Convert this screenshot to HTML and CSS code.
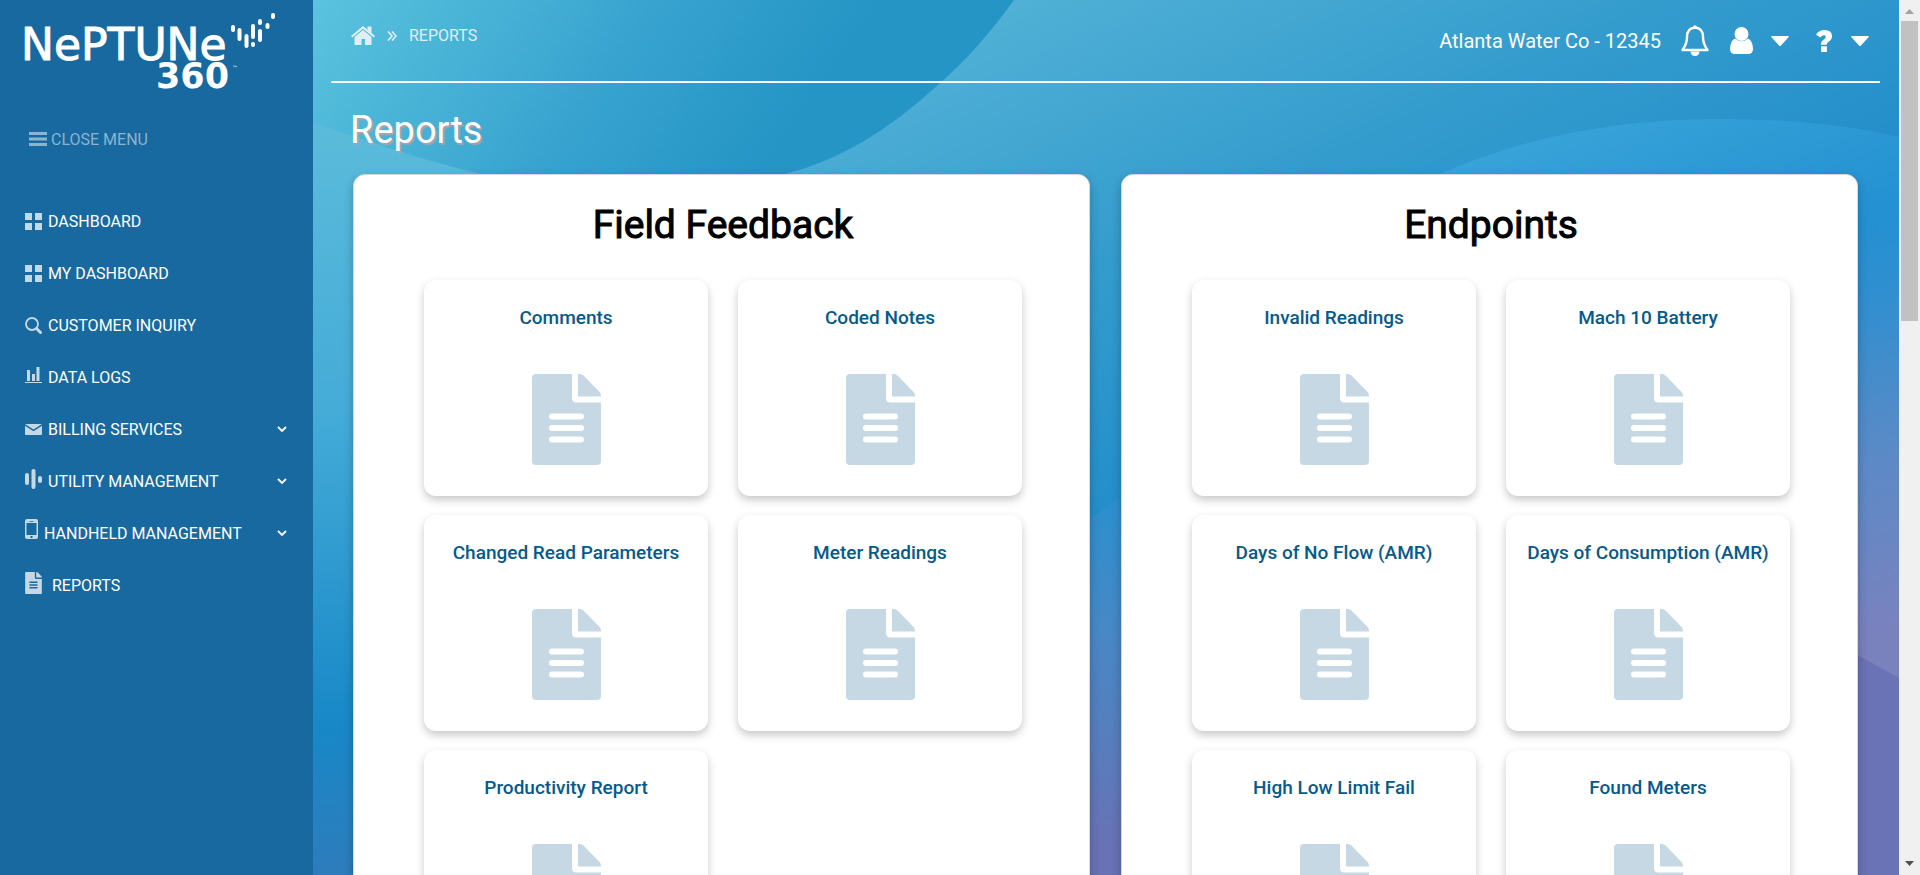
FILE: index.html
```html
<!DOCTYPE html>
<html lang="en">
<head>
<meta charset="utf-8">
<title>Neptune 360 - Reports</title>
<link rel="stylesheet" href="styles.css">
</head>
<body>
<svg class="defs" aria-hidden="true">
  <symbol id="doc" viewBox="0 0 69 91">
    <path fill-rule="evenodd" d="M4 0H40V24Q40 28.500 44.500 28.500H69V87Q69 91 65 91H4Q0 91 0 87V4Q0 0 4 0ZM20 39.500A3 3 0 0 0 20 45.500H49A3 3 0 0 0 49 39.500ZM20 51A3 3 0 0 0 20 57H49A3 3 0 0 0 49 51ZM20 62.500A3 3 0 0 0 20 68.500H49A3 3 0 0 0 49 62.500Z"/>
    <path d="M46 0H48Q50 0 51.500 1.500L68 18.500Q69 20 69 22.500H46Z"/>
  </symbol>
  <symbol id="grid" viewBox="0 0 17 17"><path d="M0 0h7v7H0zM10 0h7v7h-7zM0 10h7v7H0zM10 10h7v7h-7z"/></symbol>
  <symbol id="chevron" viewBox="0 0 10 7"><path d="M1 1l4 4 4-4" fill="none" stroke="currentColor" stroke-width="1.800"/></symbol>
  <symbol id="caret" viewBox="0 0 18 10"><path d="M1 0H17Q18.500 0 17.500 1.200L10 9.500Q9 10.500 8 9.500L.5 1.200Q-.5 0 1 0Z"/></symbol>
</svg>

<aside class="sidebar">
  <a class="logo" href="#" aria-label="Neptune 360">
    <svg viewBox="0 0 256 80" width="256" height="80">
      <text class="logo-name" x="-4" y="48">NePTUNe</text>
      <text class="logo-number" x="131" y="76">360</text>
      <text class="logo-mark" x="207" y="58">™</text>
      <g stroke="#fff" stroke-width="4" stroke-linecap="round">
        <path d="M208 15v3M214.500 18v9M221.500 24v10M228 14v11M228 32v1M235 9v2M235 19v9M242.500 13v2M248 3v2"/>
      </g>
    </svg>
  </a>
  <button class="close-menu" type="button">
    <svg viewBox="0 0 18 14" width="18" height="14"><path d="M0 0h18v3H0zM0 5.500h18v3H0zM0 11h18v3H0z"/></svg>
    CLOSE MENU
  </button>
  <nav>
    <ul class="nav">
      <li><a href="#"><svg width="17" height="17"><use href="#grid"/></svg><span>DASHBOARD</span></a></li>
      <li><a href="#"><svg width="17" height="17"><use href="#grid"/></svg><span>MY DASHBOARD</span></a></li>
      <li><a href="#"><svg viewBox="0 0 17 17" width="17" height="17"><circle cx="7" cy="7" r="6" fill="none" stroke="currentColor" stroke-width="1.800"/><path d="M11.500 11.500L15.500 15.500" stroke="currentColor" stroke-width="3" stroke-linecap="round"/></svg><span>CUSTOMER INQUIRY</span></a></li>
      <li><a href="#"><svg class="raised" viewBox="0 0 17 16" width="17" height="16"><path d="M2 3h3v11H2zM7 7h3v7H7zM11.500 0h3v14h-3zM0 15h17v1H0z"/></svg><span>DATA LOGS</span></a></li>
      <li><a href="#"><svg viewBox="0 0 17 11" width="17" height="11"><path d="M0 0H17L8.500 5.500ZM0 1.800L8.500 7.200 17 1.800V10Q17 11 16 11H1Q0 11 0 10Z"/></svg><span>BILLING SERVICES</span><svg class="chevron" width="10" height="7"><use href="#chevron"/></svg></a></li>
      <li><a href="#"><svg class="raised" viewBox="0 0 17 20" width="17" height="20"><rect y="4" width="4" height="12" rx="2"/><rect x="6.500" width="4" height="20" rx="2"/><rect x="13" y="7" width="4" height="7" rx="2"/></svg><span>UTILITY MANAGEMENT</span><svg class="chevron" width="10" height="7"><use href="#chevron"/></svg></a></li>
      <li><a href="#"><svg class="raised-high" viewBox="0 0 13 20" width="13" height="20"><path fill-rule="evenodd" d="M2 0H11Q13 0 13 2V18Q13 20 11 20H2Q0 20 0 18V2Q0 0 2 0ZM1.500 4V16H11.500V4ZM4.500 2V2.800H8.500V2ZM5.500 17V19H7.500V17Z"/></svg><span>HANDHELD MANAGEMENT</span><svg class="chevron" width="10" height="7"><use href="#chevron"/></svg></a></li>
      <li><a class="current" href="#"><svg class="raised" width="17" height="22"><use href="#doc"/></svg><span>REPORTS</span></a></li>
    </ul>
  </nav>
</aside>

<div class="content">
  <svg class="backdrop" viewBox="0 0 1586 875" preserveAspectRatio="none" aria-hidden="true">
    <defs>
      <linearGradient id="base" gradientUnits="userSpaceOnUse" x1="600" y1="0" x2="900" y2="640">
        <stop offset="0" stop-color="#55b4d7"/><stop offset=".45" stop-color="#349ccd"/><stop offset=".8" stop-color="#228dca"/><stop offset="1" stop-color="#228dca"/>
      </linearGradient>
      <linearGradient id="corner" gradientUnits="userSpaceOnUse" x1="0" y1="0" x2="380" y2="270">
        <stop offset="0" stop-color="#5ac3de"/><stop offset=".6" stop-color="#38a3cf"/><stop offset="1" stop-color="#2495c5"/>
      </linearGradient>
      <linearGradient id="left" x1="0" y1="122" x2="0" y2="875" gradientUnits="userSpaceOnUse">
        <stop offset="0" stop-color="#5bbbda"/><stop offset=".38" stop-color="#45acd8"/><stop offset=".8" stop-color="#1888c7"/><stop offset="1" stop-color="#2e7cbb"/>
      </linearGradient>
      <linearGradient id="bubble" gradientUnits="userSpaceOnUse" x1="1260" y1="119" x2="1480" y2="670">
        <stop offset="0" stop-color="#38a3d8"/><stop offset=".34" stop-color="#2391d2"/><stop offset=".46" stop-color="#2f8fd0"/><stop offset=".72" stop-color="#5b8ac6"/><stop offset="1" stop-color="#7a82be"/>
      </linearGradient>
      <linearGradient id="middle" gradientUnits="userSpaceOnUse" x1="0" y1="490" x2="0" y2="850">
        <stop offset="0" stop-color="#2a90cf"/><stop offset=".4" stop-color="#4888c5"/><stop offset="1" stop-color="#6972b4"/>
      </linearGradient>
    </defs>
    <rect width="1586" height="875" fill="url(#base)"/>
    <path d="M0 0H701Q665 50 627 83Q550 155 472 174L300 300H0Z" fill="url(#corner)"/>
    <path d="M0 122Q90 155 167 174L400 300V875H0Z" fill="url(#left)"/>
    <path d="M1127 174Q1250 119 1407 119Q1510 119 1586 137V875H1100V200Z" fill="url(#bubble)"/>
    <path d="M760 532L840 473H1100V875H760Z" fill="url(#middle)"/>
    <path d="M1500 630L1586 678V875H1500Z" fill="#6973b5"/>
  </svg>

  <header class="topbar">
    <nav class="breadcrumbs" aria-label="Breadcrumb">
      <a href="#" aria-label="Home"><svg viewBox="0 0 24 19" width="24" height="19"><path d="M12 0L16.500 3.700V.5H20.500V7L24 10 22.800 11.500 12 2.700 1.200 11.500 0 10Z"/><path d="M12 4L20.500 11V19H14V13H10.500V19H3.500V11Z"/></svg></a>
      <svg class="separator" viewBox="0 0 10 10" width="10" height="10"><path d="M1 .5L5 5 1 9.500M5 .5L9 5 5 9.500" fill="none" stroke="currentColor" stroke-width="1.600"/></svg>
      <a href="#">REPORTS</a>
    </nav>
    <div class="account">
      <span>Atlanta Water Co - 12345</span>
      <button class="bell" type="button" aria-label="Notifications"><svg viewBox="0 0 28 31" width="28" height="31"><path d="M14 2.500C7.500 3 6 7.500 6 12C6 18 4.500 21 1.500 25H26.500C23.500 21 22 18 22 12C22 7.500 20.500 3 14 2.500Z" fill="none" stroke="currentColor" stroke-width="2.400" stroke-linejoin="round"/><circle cx="14" cy="2" r="1.800"/><path d="M9.500 26.500H18.500Q18 31 14 31Q10 31 9.500 26.500Z"/></svg></button>
      <button class="user" type="button" aria-label="User menu"><svg viewBox="0 0 23 27" width="23" height="27"><circle cx="11.500" cy="7" r="7"/><path d="M5 11.500Q11.500 17 18 11.500Q23 14 23 22Q23 27 18 27H5Q0 27 0 22Q0 14 5 11.500Z"/></svg><svg width="18" height="10"><use href="#caret"/></svg></button>
      <button class="help" type="button" aria-label="Help menu"><svg viewBox="0 0 16 22" width="16" height="22"><path d="M0 4.500Q3 0 8.300 0Q16 0 16 6.300Q16 9.500 12.800 11.500Q10.700 12.800 10.700 14.800H5Q4.700 11.500 7.500 9.700Q9.700 8.300 9.700 6.900Q9.700 5.200 8 5.200Q6 5.200 4.200 7.600ZM5 16.300H10.900V22H5Z"/></svg><svg width="18" height="10"><use href="#caret"/></svg></button>
    </div>
  </header>

  <main>
    <h1>Reports</h1>
    <div class="panels">
      <section class="panel">
        <h2>Field Feedback</h2>
        <div class="cards">
          <a class="card" href="#"><h3>Comments</h3><svg width="69" height="91"><use href="#doc"/></svg></a>
          <a class="card" href="#"><h3>Coded Notes</h3><svg width="69" height="91"><use href="#doc"/></svg></a>
          <a class="card" href="#"><h3>Changed Read Parameters</h3><svg width="69" height="91"><use href="#doc"/></svg></a>
          <a class="card" href="#"><h3>Meter Readings</h3><svg width="69" height="91"><use href="#doc"/></svg></a>
          <a class="card" href="#"><h3>Productivity Report</h3><svg width="69" height="91"><use href="#doc"/></svg></a>
        </div>
      </section>
      <section class="panel">
        <h2>Endpoints</h2>
        <div class="cards">
          <a class="card" href="#"><h3>Invalid Readings</h3><svg width="69" height="91"><use href="#doc"/></svg></a>
          <a class="card" href="#"><h3>Mach 10 Battery</h3><svg width="69" height="91"><use href="#doc"/></svg></a>
          <a class="card" href="#"><h3>Days of No Flow (AMR)</h3><svg width="69" height="91"><use href="#doc"/></svg></a>
          <a class="card" href="#"><h3>Days of Consumption (AMR)</h3><svg width="69" height="91"><use href="#doc"/></svg></a>
          <a class="card" href="#"><h3>High Low Limit Fail</h3><svg width="69" height="91"><use href="#doc"/></svg></a>
          <a class="card" href="#"><h3>Found Meters</h3><svg width="69" height="91"><use href="#doc"/></svg></a>
        </div>
      </section>
    </div>
  </main>
</div>

<div class="scrollbar" aria-hidden="true">
  <svg viewBox="0 0 9 5" width="9" height="5"><path d="M0 5L4.500 0 9 5Z" fill="#a3a3a3"/></svg>
  <div class="track"><div class="thumb"></div></div>
  <svg viewBox="0 0 9 5" width="9" height="5"><path d="M0 0H9L4.500 5Z" fill="#505050"/></svg>
</div>
</body>
</html>
```
FILE: styles.css
```css
* { box-sizing: border-box; }

body {
  margin: 0;
  display: grid;
  grid-template-columns: 313px 1fr 21px;
  height: 100vh;
  overflow: hidden;
  font-family: Roboto, sans-serif;
  font-size: 16px;
  line-height: 20px;
  color: #fff;
}

a { color: inherit; text-decoration: none; }
svg { display: block; flex: none; fill: currentColor; }
button {
  display: flex;
  align-items: center;
  padding: 0;
  border: 0;
  background: none;
  color: inherit;
  font: inherit;
  cursor: pointer;
}
h1, h2, h3 { margin: 0; }
.defs { position: absolute; width: 0; height: 0; }

/* Sidebar */
.sidebar { background: #17699f; overflow: hidden; }
.logo { display: block; margin: 12px 0 0 25px; }
.logo svg { overflow: visible; }
.logo-name { font: 44px "DejaVu Sans", sans-serif; stroke: #fff; stroke-width: 1px; }
.logo-number { font: bold 35px "DejaVu Sans", sans-serif; }
.logo-mark { font: 6px "DejaVu Sans", sans-serif; }
.close-menu { margin: 37px 0 0 29px; gap: 4px; color: #8bb4cf; line-height: 22px; }
.close-menu svg { margin-bottom: 2px; }
.nav { list-style: none; margin: 45px 0 0; padding: 0 26px 0 25px; }
.nav a { display: flex; align-items: center; gap: 6px; height: 52px; }
.nav a > svg { margin-bottom: 2px; color: #c5d9e4; }
.nav a.current { gap: 10px; }
.nav a > .raised { margin-bottom: 6px; }
.nav a > .raised-high { margin-bottom: 10px; }
.nav a > .chevron { margin-left: auto; color: #fff; }

/* Content area */
.content { position: relative; overflow: hidden; min-width: 0; }
.backdrop { position: absolute; inset: 0; width: 100%; height: 100%; z-index: -1; }

.topbar {
  display: flex;
  justify-content: space-between;
  align-items: flex-start;
  height: 83px;
  margin: 0 19px 0 18px;
  padding: 20px 11px 0 20px;
  border-bottom: 2px solid #fff;
}
.breadcrumbs { display: flex; align-items: center; height: 31px; color: #e0eff5; }
.separator { margin: 0 12px; }
.account { display: flex; align-items: center; height: 41px; font-size: 20px; }
.bell { margin: 0 21px 0 20px; }
.user { gap: 18px; }
.help { gap: 19px; margin-left: 27px; }

h1 {
  margin: 22px 37px 19px;
  font-size: 38px;
  line-height: 50px;
  font-weight: 400;
  text-shadow: 2px 2px 1px rgba(190, 160, 160, .8);
}

.panels { display: grid; grid-template-columns: 1fr 1fr; gap: 31px; padding: 0 41px 0 40px; }
.panel {
  padding: 25px 67px 40px 70px;
  border: 1px solid #d3d9dc;
  border-radius: 12px;
  background: #fff;
  box-shadow: 0 4px 10px rgba(0, 0, 0, .25);
  text-align: center;
}
h2 {
  margin-bottom: 30px;
  font-size: 39px;
  line-height: 50px;
  font-weight: 400;
  color: #000;
  -webkit-text-stroke: 1px #000;
}

.cards { display: grid; grid-template-columns: 1fr 1fr; gap: 19px 30px; }
.card {
  display: flex;
  flex-direction: column;
  align-items: center;
  height: 216px;
  padding-top: 26px;
  border-radius: 12px;
  background: #fff;
  box-shadow: 0 4px 8px rgba(0, 0, 0, .22);
  color: #c5d8e4;
}
h3 { margin-bottom: 44px; font-size: 19px; line-height: 24px; font-weight: 500; color: #055a8c; }

/* Scrollbar */
.scrollbar {
  display: flex;
  flex-direction: column;
  align-items: center;
  padding: 9px 2px;
  background: #f0f0f0;
}
.track { flex: 1; width: 17px; padding: 7px 0; }
.thumb { height: 36%; background: #c1c1c1; }
```
